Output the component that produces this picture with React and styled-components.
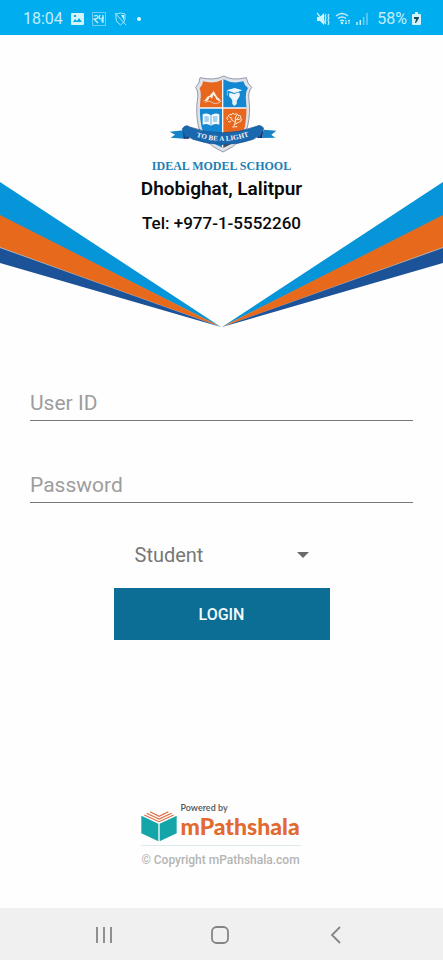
import React from "react";
import styled, { createGlobalStyle } from "styled-components";

const GlobalStyle = createGlobalStyle`
  *, *::before, *::after { box-sizing: border-box; }
  body { margin: 0; background: #fefefe; font-family: Roboto, "Noto Sans", sans-serif; }
  button, input, select { font-family: inherit; }
`;

const Screen = styled.div`
  min-height: 100vh;
  display: flex;
  flex-direction: column;
`;

const StatusBar = styled.div`
  height: 35px;
  flex: none;
  display: flex;
  align-items: center;
  justify-content: space-between;
  padding: 2px 22px 0 23px;
  background: #00adef;
  color: #c4eefa;
  font-size: 16px;
  line-height: 20px;
`;

const StatusGroup = styled.div`
  display: flex;
  align-items: center;
  gap: ${(p) => p.$gap}px;
`;

const Header = styled.header`
  display: grid;
  height: 292px;
  flex: none;
`;

const Rays = styled.svg`
  grid-area: 1 / 1;
  width: 100%;
  height: 292px;
`;

const School = styled.div`
  grid-area: 1 / 1;
  display: flex;
  flex-direction: column;
  align-items: center;
  padding-top: 38px;
  color: #0a0a0a;
  text-align: center;
`;

const SchoolName = styled.h1`
  margin: 5px 0 0;
  font: bold 12px/16px "Liberation Serif", serif;
  color: #1c7fb6;
`;

const Place = styled.p`
  margin: 4px 0 0;
  font-size: 19px;
  line-height: 22px;
  font-weight: 600;
`;

const Phone = styled.p`
  margin: 13px 0 0;
  font-size: 17px;
  line-height: 20px;
  font-weight: 500;
`;

const Form = styled.form`
  display: flex;
  flex-direction: column;
  align-items: center;
  padding: 58px 30px 0;
`;

const Field = styled.input`
  width: 100%;
  height: 36px;
  margin-bottom: 46px;
  padding: 0;
  border: 0;
  border-bottom: 1px solid #777;
  border-radius: 0;
  outline: 0;
  background: transparent;
  color: #444;
  font-size: 21px;
  line-height: 28px;
  &::placeholder { color: #9d9d9d; opacity: 1; }
`;

const RoleBox = styled.div`
  display: grid;
  align-items: center;
  width: 174px;
  height: 32px;
  margin: -10px 0 17px;
  svg { grid-area: 1 / 1; justify-self: end; pointer-events: none; }
`;

const Role = styled.select`
  grid-area: 1 / 1;
  width: 100%;
  height: 32px;
  padding: 0;
  border: 0;
  appearance: none;
  background: transparent;
  color: #777;
  font-size: 20px;
`;

const LoginButton = styled.button`
  width: 100%;
  max-width: 216px;
  height: 52px;
  padding: 0;
  border: 0;
  background: #0c6d95;
  color: #f4fbfd;
  font-size: 16px;
  font-weight: 500;
`;

const Footer = styled.footer`
  display: flex;
  flex-direction: column;
  align-items: center;
  margin-top: auto;
  padding: 0 2px 40px 0;
`;

const Brand = styled.div`
  display: flex;
  align-items: center;
  gap: 4px;
  width: 160px;
  height: 44px;
  border-bottom: 1px solid #dfeaec;
`;

const BrandText = styled.div`
  padding-bottom: 6px;
  white-space: nowrap;
  font-family: Lato, sans-serif;
`;

const Powered = styled.div`
  color: #555;
  font-size: 9px;
  line-height: 11px;
  font-weight: 600;
`;

const BrandName = styled.div`
  color: #e2692f;
  font-size: 23px;
  line-height: 27px;
  font-weight: 900;
`;

const Copyright = styled.p`
  margin: 6px 0 0;
  color: #b4b4b4;
  font-size: 12px;
  line-height: 16px;
  font-weight: 500;
`;

const NavBar = styled.nav`
  display: flex;
  flex: none;
  align-items: center;
  justify-content: center;
  gap: 76px;
  height: 52px;
  padding: 2px 3px 0 0;
  background: #f0f0f0;
`;

const NavButton = styled.button`
  display: grid;
  place-items: center;
  width: 40px;
  height: 40px;
  padding: 0;
  border: 0;
  background: none;
`;

function Crest() {
  const shield = "M282 34 Q255 49 211 39 Q211 56 198 68 Q208 82 203 108 Q198 142 206 184 Q214 232 280 262 Q346 232 354 184 Q363 142 358 108 Q354 82 366 68 Q352 56 350 39 Q308 49 282 34Z";
  return (
    <svg width="115" height="80" viewBox="103 25 345 240" aria-hidden="true">
      <defs>
        <clipPath id="shield"><path d="M282 44 Q253 59 220 50 Q219 63 209 70 Q216 84 212 108 Q208 142 215 184 Q223 226 280 250 Q337 226 346 184 Q353 142 349 108 Q346 84 355 70 Q344 63 341 50 Q308 59 282 44Z" /></clipPath>
        <path id="motto" d="M190 203 Q279 237 368 201" />
      </defs>
      <path d={shield} fill="#dfe2e8" stroke="#9499a8" strokeWidth="3" />
      <g clipPath="url(#shield)">
        <path fill="#e7671f" d="M190 30h89v100h-89z" />
        <path fill="#1387d0" d="M279 30h90v100h-90z" />
        <path fill="#1387d0" d="M190 130h89v140h-89z" />
        <path fill="#e7671f" d="M279 130h90v75h-90z" />
        <path fill="#4f4a52" d="M279 205h90v60h-90z" />
        <path d="M279 30v230M190 130h180" stroke="#f8f8fa" strokeWidth="4" />
      </g>
      <path d="M217 112q10-4 16-16l7-3 12-14 11 19 6 4 6 11-14-8-4-7-6-8-4 12-6-6-7 12-11 1z" fill="#fbeee5" />
      <path d="M225 113q14-7 22 0t24 0" fill="none" stroke="#fbeee5" strokeWidth="2" />
      <path d="M291 77l24-7 23 7-23 8zM300 84q-5 11 4 17l4 7v10l6 6 7-6v-9l5-8q8-9 2-18l-14 5z" fill="#eff7fc" />
      <path d="M293 78v15M308 108h14M307 115h14" fill="none" stroke="#c8e5f5" strokeWidth="2" />
      <path d="M219 149q14-6 25 3q12-9 25-3v31q-14-5-25 3q-12-8-25-3z" fill="#f1f9fd" />
      <path d="M244 152v30M224 157h13M224 163h14M224 169h13M250 157h13M250 163h13M250 169h12" stroke="#1387d0" strokeWidth="2" />
      <g fill="none" stroke="#ffe8d3" strokeWidth="3" strokeLinecap="round">
        <path d="M313 184q7-10 4-24M317 174l-13-11M317 169l10-12M318 178l14-8M293 165q-6-7 3-9 0-10 9-5 3-10 10-2 8-5 10 3 12-1 7 8 9 5 0 10M296 171q5 5 8-2M300 157l7 4M322 151l-5 8M332 163l-9 2M309 187l13-1" />
      </g>
      <path d="M120 201l41-4 4 25-42-3 13-9zM440 198l-38-3-5 25 40-1-12-9z" fill="#1782c5" />
      <path d="M161 197l19 25h-18zM402 195l-20 25h15z" fill="#102a63" />
      <path d="M158 192 Q168 178 180 187 Q279 223 381 185 Q391 178 402 190 L391 218 Q382 213 371 224 Q281 255 190 224 Q175 213 166 220Z" fill="#1967ac" stroke="#174b8e" strokeWidth="2" />
      <text fill="#f4faff" fontFamily="Liberation Serif, serif" fontSize="21" fontWeight="bold" dy="9"><textPath href="#motto" startOffset="50%" textAnchor="middle">TO BE A LIGHT</textPath></text>
    </svg>
  );
}

export default function App() {
  return (
    <Screen>
      <GlobalStyle />
      <StatusBar>
        <StatusGroup $gap={8}>
          <span>18:04</span>
          <svg width="13" height="12" viewBox="0 0 13 12"><path fillRule="evenodd" fill="#d5f3fa" d="M1 0h11q1 0 1 1v10q0 1-1 1H1q-1 0-1-1V1q0-1 1-1zm1 9h9L8 5 6 8 4 6zM3 2v2h2V2z" /></svg>
          <svg width="14" height="14" viewBox="0 0 14 14" fill="none" stroke="#d0f2fb"><path strokeWidth=".7" opacity=".7" d="M.5.5h13v13H.5z" /><path strokeWidth="1.200" d="M2 4q4-1 4 1t-4 2l4 4M8 3q-2 4 1 4 2 0 2-3 1 5-2 5M11 3v8" /></svg>
          <svg width="13" height="14" viewBox="0 0 13 14" fill="none" stroke="#a9e5f7"><path d="M2 2l4.500-1L11 2v5q0 3-4.500 6Q2 10 2 7zM1 1l11 12" /><path fill="#d5f3fa" stroke="none" d="M7 3h3v5z" /></svg>
          <svg width="10" height="6" viewBox="0 0 10 6"><circle cx="4" cy="3" r="2" fill="#e2f8fc" /></svg>
        </StatusGroup>
        <StatusGroup $gap={9}>
          <StatusGroup $gap={5}>
            <svg width="14" height="14" viewBox="0 0 14 14" fill="none" stroke="#c4eefa"><path fill="#d5f3fa" stroke="none" d="M1 5h3l4-4v12L4 9H1z" /><path strokeWidth="1.200" d="M1 1l9 11M10 2l-1 2 1 2-1 2 1 2M13 2l-1 2 1 2-1 2 1 3-1 2" /></svg>
            <svg width="16" height="13" viewBox="0 0 16 13" fill="none" stroke="#c4eefa" strokeWidth="1.400"><path d="M1 4q6-5 12 0M3 6.500q4-3 8 0M5 9q2-1.500 4 0" /><circle cx="7" cy="11" r=".6" /><path strokeWidth="1" d="M11 8v4M10 11l1 1 1-1M14 12V8M13 9l1-1 1 1" /></svg>
            <svg width="12" height="12" viewBox="0 0 12 12" stroke="#c4eefa" strokeWidth="1.500"><path d="M1 12V9M4.300 12V7" /><path opacity=".55" d="M7.600 12V4M11 12V0" /></svg>
          </StatusGroup>
          <StatusGroup $gap={5}>
            <span>58%</span>
            <svg width="9" height="13" viewBox="0 0 9 13"><path fill="#d5f3fa" d="M3 0h3v2h2q1 0 1 1v9q0 1-1 1H1q-1 0-1-1V3q0-1 1-1h2z" /><path fill="#164c63" d="M2 5h5v1L4 11H3l1-4H2z" /></svg>
          </StatusGroup>
        </StatusGroup>
      </StatusBar>

      <Header>
        <Rays viewBox="0 0 443 292" preserveAspectRatio="none" aria-hidden="true">
          <path fill="#b9b3b4" d="M0 211L221 292L443 211V214L221 292L0 214z" />
          <path fill="#0795da" d="M0 147L221 292L0 181zM443 147L222 292L443 181z" />
          <path fill="#e6691c" d="M0 180L221 292L0 212zM443 180L222 292L443 212z" />
          <path fill="#1c5297" d="M0 213L221 292L0 228zM443 213L222 292L443 228z" />
        </Rays>
        <School>
          <Crest />
          <SchoolName>IDEAL MODEL SCHOOL</SchoolName>
          <Place>Dhobighat, Lalitpur</Place>
          <Phone>Tel: +977-1-5552260</Phone>
        </School>
      </Header>

      <Form onSubmit={(e) => e.preventDefault()}>
        <Field type="text" placeholder="User ID" aria-label="User ID" />
        <Field type="password" placeholder="Password" aria-label="Password" />
        <RoleBox>
          <Role aria-label="Role" defaultValue="Student">
            <option>Student</option>
          </Role>
          <svg width="12" height="6" viewBox="0 0 12 6"><path fill="#6b6b6b" d="M0 0h12L6 6z" /></svg>
        </RoleBox>
        <LoginButton type="submit">LOGIN</LoginButton>
      </Form>

      <Footer>
        <Brand>
          <svg width="36" height="36" viewBox="0 0 108 108" aria-hidden="true">
            <path fill="#14a5a8" d="M1 29L52 53V106L1 82zM56 53L107 29V82L56 106z" />
            <path fill="none" stroke="#dc6e43" strokeWidth="3.500" d="M10 27L54 47L98 27M17 22L54 39L92 22M27 17L54 31L82 17" />
          </svg>
          <BrandText>
            <Powered>Powered by</Powered>
            <BrandName>mPathshala</BrandName>
          </BrandText>
        </Brand>
        <Copyright>© Copyright mPathshala.com</Copyright>
      </Footer>

      <NavBar aria-label="System">
        <NavButton aria-label="Recent apps"><svg width="18" height="18" viewBox="0 0 18 18" stroke="#858585" strokeWidth="1.800"><path d="M2 1v16M9 1v16M16 1v16" /></svg></NavButton>
        <NavButton aria-label="Home"><svg width="18" height="18" viewBox="0 0 18 18" fill="none" stroke="#858585" strokeWidth="1.800"><rect x="1" y="1" width="16" height="16" rx="4.500" /></svg></NavButton>
        <NavButton aria-label="Back"><svg width="18" height="18" viewBox="0 0 18 18" fill="none" stroke="#858585" strokeWidth="1.800"><path d="M13 1L5 9l8 8" /></svg></NavButton>
      </NavBar>
    </Screen>
  );
}
